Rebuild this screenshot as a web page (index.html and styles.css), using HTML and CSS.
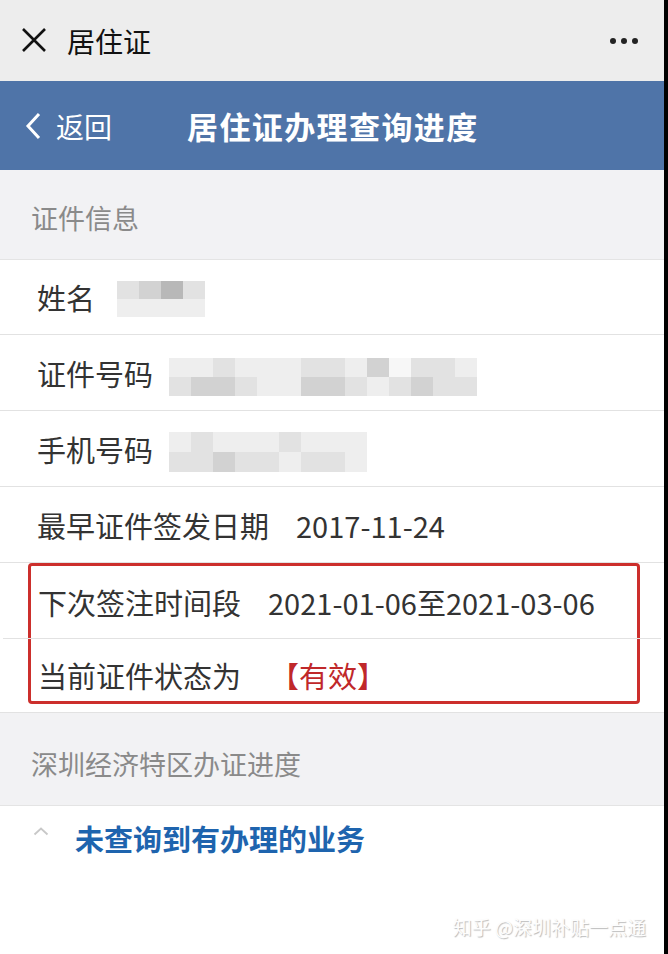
FILE: index.html
```html
<!DOCTYPE html>
<html lang="zh-CN">
<head>
    <meta charset="UTF-8">
    <meta name="viewport" content="width=device-width, initial-scale=1.0">
    <title>居住证</title>
    <link rel="stylesheet" href="styles.css">
</head>
<body>
    <div class="page">
        <div class="topbar">
            <svg class="close-icon" width="28" height="28" viewBox="0 0 28 28">
                <path d="M3 3 L25 25 M25 3 L3 25" stroke="#111" stroke-width="2.6" fill="none"/>
            </svg>
            <span class="top-title">居住证</span>
            <span class="more"><i></i><i></i><i></i></span>
        </div>

        <div class="navbar">
            <div class="back">
                <svg width="18" height="30" viewBox="0 0 18 30">
                    <path d="M15 3 L4 15 L15 27" stroke="#fff" stroke-width="3" fill="none"/>
                </svg>
                <span>返回</span>
            </div>
            <h1 class="nav-title">居住证办理查询进度</h1>
        </div>

        <div class="section-head">证件信息</div>
        <div class="list">
            <div class="row">
                <span class="label">姓名</span>
                <div class="mosaic m-name">
                    <i class="s2"></i><i class="s3"></i><i class="s4"></i><i class="s2"></i>
                    <i class="s1"></i><i class="s1"></i><i class="s1"></i><i class="s1"></i>
                </div>
            </div>
            <div class="row">
                <span class="label">证件号码</span>
                <div class="mosaic m-id">
                    <i class="s1"></i><i class="s1"></i><i class="s2"></i><i class="s1"></i><i class="s1"></i><i class="s1"></i><i class="s2"></i><i class="s2"></i><i class="s1"></i><i class="s3"></i><i class="s0"></i><i class="s2"></i><i class="s2"></i><i class="s1"></i>
                    <i class="s2"></i><i class="s3"></i><i class="s3"></i><i class="s2"></i><i class="s1"></i><i class="s1"></i><i class="s3"></i><i class="s3"></i><i class="s2"></i><i class="s1"></i><i class="s2"></i><i class="s3"></i><i class="s2"></i><i class="s2"></i>
                </div>
            </div>
            <div class="row">
                <span class="label">手机号码</span>
                <div class="mosaic m-phone">
                    <i class="s1"></i><i class="s2"></i><i class="s1"></i><i class="s1"></i><i class="s1"></i><i class="s2"></i><i class="s1"></i><i class="s1"></i><i class="s1"></i>
                    <i class="s2"></i><i class="s2"></i><i class="s3"></i><i class="s2"></i><i class="s2"></i><i class="s1"></i><i class="s2"></i><i class="s2"></i><i class="s1"></i>
                </div>
            </div>
            <div class="row">
                <span class="label">最早证件签发日期</span>
                <span class="value">2017-11-24</span>
            </div>
            <div class="highlight">
                <div class="row">
                    <span class="label">下次签注时间段</span>
                    <span class="value">2021-01-06至2021-03-06</span>
                </div>
                <div class="row">
                    <span class="label">当前证件状态为</span>
                    <span class="value status">【有效】</span>
                </div>
            </div>
        </div>

        <div class="section-head tall">深圳经济特区办证进度</div>
        <div class="result">
            <svg class="caret" width="16" height="10" viewBox="0 0 16 10">
                <path d="M1.5 8.5 L8 2.5 L14.5 8.5" stroke="#c8c8c8" stroke-width="1.8" fill="none"/>
            </svg>
            <span class="result-text">未查询到有办理的业务</span>
        </div>
        <div class="watermark">知乎 @深圳补贴一点通</div>
    </div>
</body>
</html>
```

FILE: styles.css
```css
body {
    margin: 0;
    font-family: "Noto Sans CJK SC", "Noto Sans", sans-serif;
    background-color: #fff;
}
.page {
    width: 668px;
    height: 954px;
    position: relative;
    overflow: hidden;
    border-right: 4px solid #000;
    box-sizing: border-box;
}
.topbar {
    height: 81px;
    background-color: #ededed;
    display: flex;
    align-items: center;
    padding: 0 26px 0 20px;
}
.close-icon {
    margin-top: -2px;
}
.top-title {
    font-size: 28px;
    color: #111;
    margin-left: 19px;
    flex: 1;
}
.more {
    display: flex;
    gap: 5px;
}
.more i {
    width: 6px;
    height: 6px;
    background-color: #222;
    border-radius: 50%;
}
.navbar {
    height: 89px;
    background-color: #4f74a8;
    display: flex;
    align-items: center;
    color: #fff;
    padding-left: 24px;
}
.back {
    display: flex;
    align-items: center;
    gap: 14px;
    font-size: 28px;
    width: 163px;
}
.nav-title {
    margin: 0;
    font-size: 31px;
    font-weight: bold;
    letter-spacing: 1.4px;
}
.section-head {
    height: 90px;
    background-color: #f2f2f4;
    color: #8a8a8a;
    font-size: 27px;
    display: flex;
    align-items: center;
    padding-left: 31px;
    padding-top: 6px;
    box-sizing: border-box;
    border-bottom: 1px solid #e4e4e4;
}
.section-head.tall {
    height: 93px;
    padding-top: 9px;
}
.list {
    background-color: #fff;
    padding-bottom: 8px;
    border-bottom: 1px solid #e2e2e2;
}
.row {
    height: 75px;
    display: flex;
    align-items: center;
    padding-left: 37px;
    border-bottom: 1px solid #e2e2e2;
    font-size: 29px;
    color: #333;
}
.list > .row:first-child {
    height: 74px;
}
.row .value {
    margin-left: 27px;
}
.row .status {
    color: #c0282a;
    margin-left: 29px;
}
.highlight {
    margin: 0 24px 0 28px;
    border: 3px solid #cc2f2c;
    border-radius: 4px;
}
.highlight .row {
    height: 72px;
    margin-right: -24px;
    margin-left: -28px;
    padding-left: 35px;
}
.highlight .row:last-child {
    border-bottom: none;
    height: 62px;
    padding-top: 10px;
    box-sizing: border-box;
}
.mosaic {
    display: grid;
    margin-left: 22px;
}
.mosaic i {
    display: block;
}
.m-name {
    grid-template-columns: repeat(4, 22px);
    grid-auto-rows: 18px;
    margin-top: 4px;
}
.m-id {
    grid-template-columns: repeat(14, 22px);
    grid-auto-rows: 19px;
    margin-left: 16px;
    margin-top: 8px;
}
.m-phone {
    grid-template-columns: repeat(9, 22px);
    grid-auto-rows: 20px;
    margin-left: 16px;
    margin-top: 6px;
}
.s0 { background-color: #f7f7f7; }
.s1 { background-color: #eeeeee; }
.s2 { background-color: #e2e2e2; }
.s3 { background-color: #d2d2d2; }
.s4 { background-color: #b8b8b8; }
.result {
    display: flex;
    align-items: center;
    padding: 11px 0 0 33px;
}
.caret {
    margin-top: -14px;
}
.result-text {
    margin-left: 26px;
    font-size: 29px;
    font-weight: bold;
    color: #1e64ae;
}
.watermark {
    position: absolute;
    right: 18px;
    bottom: 14px;
    font-size: 19px;
    color: #fdfdfd;
    text-shadow: 1px 1px 1px #bbb;
}
```
